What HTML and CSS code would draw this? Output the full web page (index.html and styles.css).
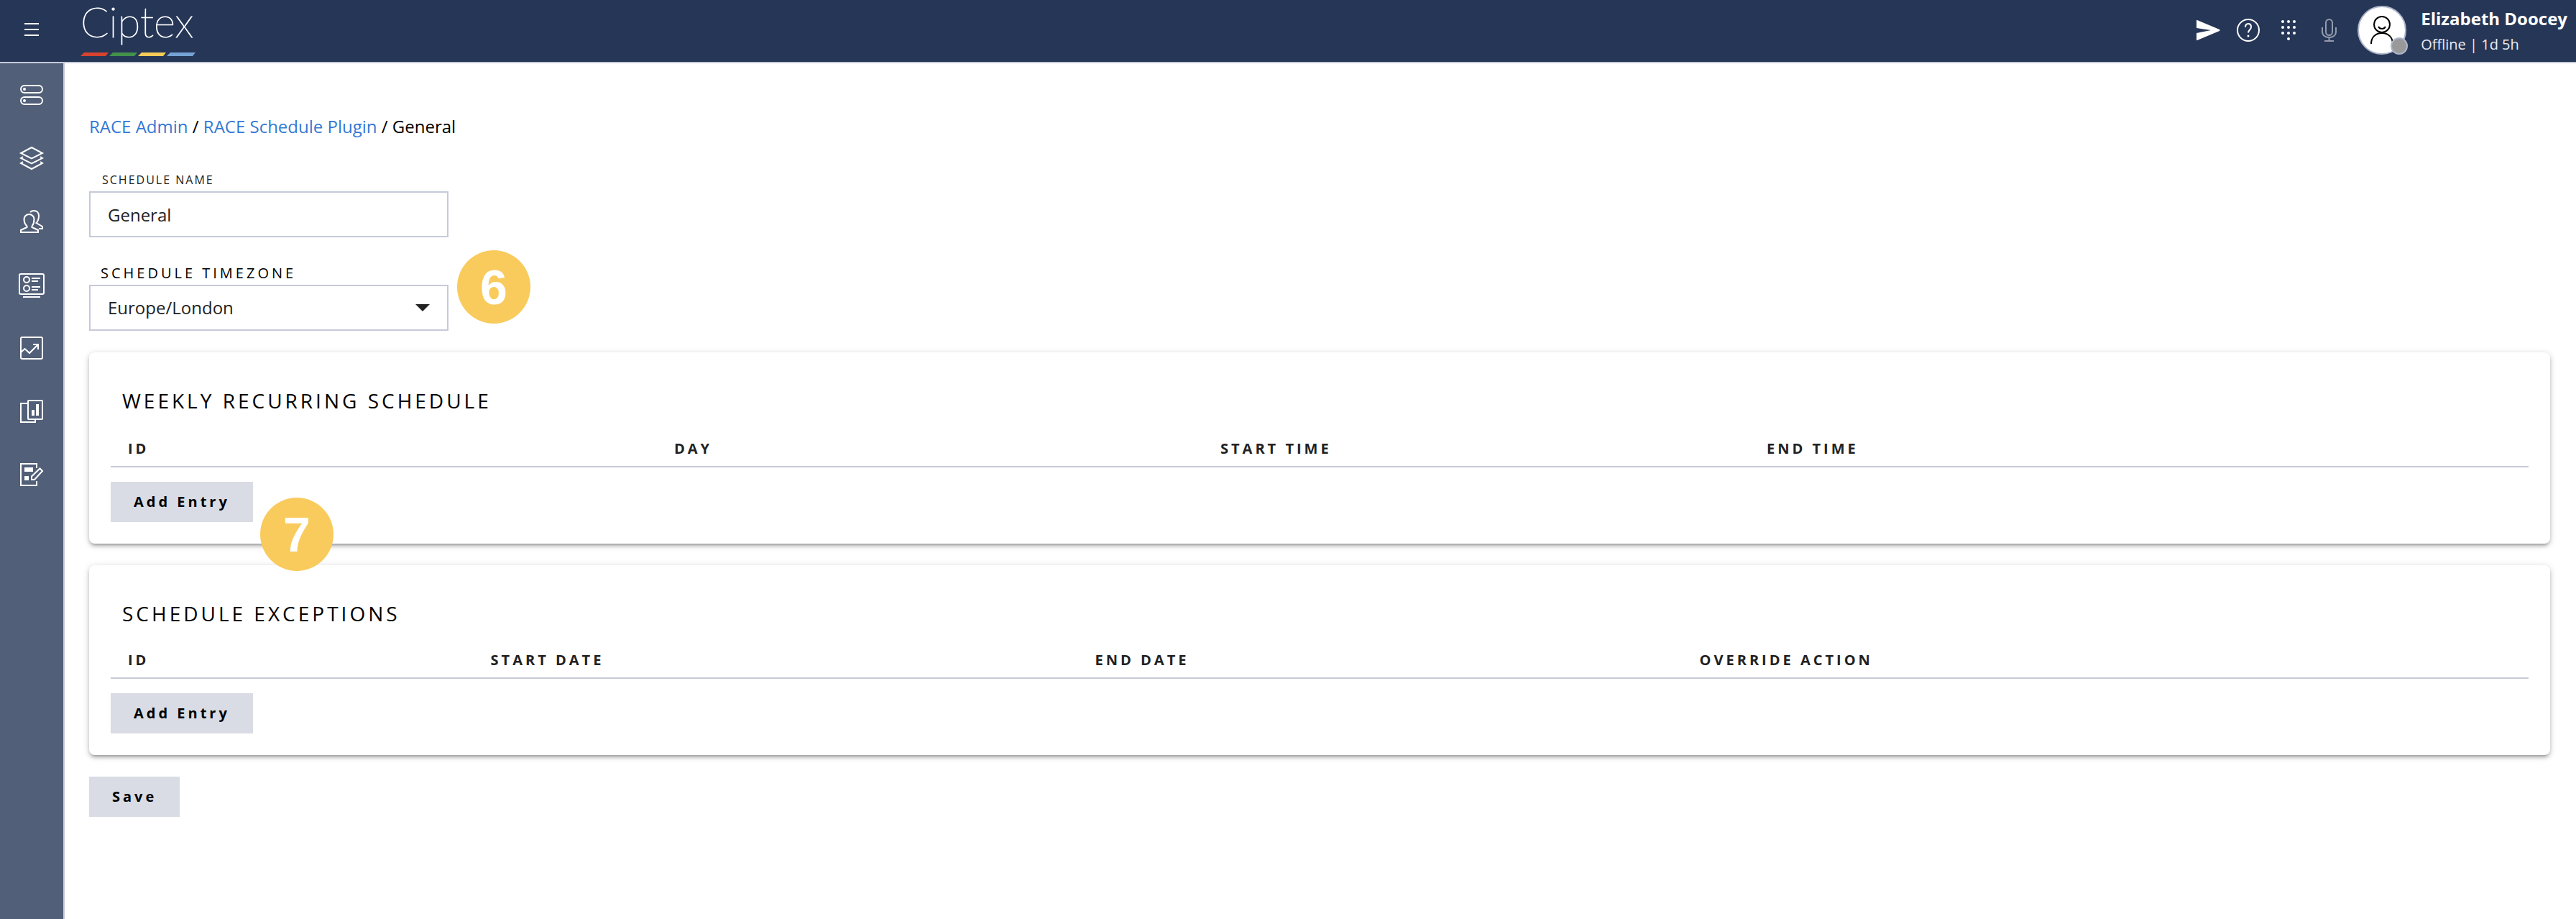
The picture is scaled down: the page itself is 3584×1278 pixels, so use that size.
FILE: index.html
```html
<!DOCTYPE html>
<html lang="en">
<head>
    <meta charset="UTF-8">
    <meta name="viewport" content="width=device-width, initial-scale=1.0">
    <title>RACE Schedule Plugin</title>

    <link rel="stylesheet" href="styles.css">
</head>
<body>

    <header class="topbar">
        <button class="iconButton menuButton" type="button" aria-label="Menu">
            <svg class="icon" viewBox="0 0 48 48"><path d="M14 15h20M14 23h20M14 31h20"/></svg>
        </button>

        <div class="logo">
            <span class="logoText">Ciptex</span>
            <svg class="logoStripes" viewBox="0 0 160 5">
                <path fill="#d8432f" d="M5 0h34l-4 5H0z"/>
                <path fill="#43914a" d="M45 0h34l-4 5H40z"/>
                <path fill="#f8cb57" d="M85 0h34l-4 5H80z"/>
                <path fill="#76a3d6" d="M125 0h35l-4 5h-36z"/>
            </svg>
        </div>

        <div class="actions">
            <button class="iconButton" type="button" aria-label="Send">
                <svg class="icon" viewBox="0 0 48 48"><path class="solid" d="M8 10.500Q8 9.500 9 10L40 23q1.500 1 0 2L9 38q-1 .5-1-1V28l20-4L8 21z"/></svg>
            </button>
            <button class="iconButton" type="button" aria-label="Help">
                <svg class="icon" viewBox="0 0 48 48"><circle cx="24" cy="24" r="15"/><path d="M20 20c0-3 1.500-5 4-5s4 2 4 4.500c0 4-4 4-4 8"/><circle class="solid" cx="24" cy="32" r="1.500"/></svg>
            </button>
            <button class="iconButton" type="button" aria-label="Dialpad">
                <svg class="icon" viewBox="0 0 48 48">
                    <g class="solid">
                        <circle cx="16" cy="12" r="2"/><circle cx="24" cy="12" r="2"/><circle cx="32" cy="12" r="2"/>
                        <circle cx="16" cy="20" r="2"/><circle cx="24" cy="20" r="2"/><circle cx="32" cy="20" r="2"/>
                        <circle cx="16" cy="28" r="2"/><circle cx="24" cy="28" r="2"/><circle cx="32" cy="28" r="2"/>
                        <circle cx="24" cy="36" r="2"/>
                    </g>
                </svg>
            </button>
            <button class="iconButton muted" type="button" aria-label="Mute">
                <svg class="icon" viewBox="0 0 48 48"><rect x="20" y="9" width="9" height="22" rx="4.500"/><path d="M15 20v6c0 5 4 8 9.500 8s9.500-3 9.500-8v-6M24.500 34v5M18 39h13"/></svg>
            </button>
        </div>

        <div class="user">
            <div class="avatar">
                <svg class="avatarIcon" viewBox="0 0 64 64"><circle cx="32" cy="24" r="11"/><path d="M27 27c2 4 8 4 10 0M17 51c0-9 6-15 15-15s15 6 15 15"/></svg>
                <span class="presence"></span>
            </div>
            <div class="userInfo">
                <div class="userName">Elizabeth Doocey</div>
                <div class="userStatus">Offline | 1d 5h</div>
            </div>
        </div>
    </header>

    <div class="layout">
        <nav class="sidebar">
            <button class="iconButton" type="button" aria-label="Queues">
                <svg class="icon" viewBox="0 0 48 48"><rect x="9" y="11" width="30" height="10" rx="5"/><rect x="9" y="27" width="30" height="10" rx="5"/><circle class="solid" cx="14" cy="16" r="2"/><circle class="solid" cx="14" cy="32" r="2"/></svg>
            </button>
            <button class="iconButton" type="button" aria-label="Tasks">
                <svg class="icon" viewBox="0 0 48 48"><path d="M24 9l15 8-15 7.500L9 17zM12 22l-3 2 15 7.500L39 24l-3-2M12 29l-3 2 15 8 15-8-3-2"/></svg>
            </button>
            <button class="iconButton" type="button" aria-label="Teams">
                <svg class="icon" viewBox="0 0 48 48"><path d="M20.500 14c-4 0-7 3-7 7 0 4 1.500 7 4 9.500V32L9 36v3h24v-3l-8.500-4v-1.500c2-2.500 3-5.500 3-9.500 0-4-3-7-7-7zM22 11c1.300-1.200 3-2 5-2 4.500 0 7 3 7 7 0 4-.5 7-3.500 10l8.500 5v3h-5"/></svg>
            </button>
            <button class="iconButton" type="button" aria-label="Admin">
                <svg class="icon" viewBox="0 0 48 48"><rect x="7" y="9" width="34" height="28" rx="2"/><circle cx="17" cy="17" r="4"/><circle cx="17" cy="29" r="4"/><path d="M24 15h12M24 19h9M24 27h12M24 31h9M12 41h24"/></svg>
            </button>
            <button class="iconButton" type="button" aria-label="Insights">
                <svg class="icon" viewBox="0 0 48 48"><rect x="9" y="9" width="30" height="30" rx="2"/><path d="M9 30l5.500-5 6.500 6 12-12M26 19h7v7"/></svg>
            </button>
            <button class="iconButton" type="button" aria-label="Dashboards">
                <svg class="icon" viewBox="0 0 48 48"><rect x="19" y="9" width="20" height="26" rx="1"/><path d="M18 13H9v26h20v-3"/><path class="solid" d="M24 22h4v8h-4zM30 14h4v16h-4z"/></svg>
            </button>
            <button class="iconButton" type="button" aria-label="Questionnaires">
                <svg class="icon" viewBox="0 0 48 48"><path d="M31 15V9H9v30h22v-6M24 31v-4.500L35.500 15.500 39 19 28 31z"/><path class="solid" d="M14 14h12v6H14zM14 26h6v6h-6z"/></svg>
            </button>
        </nav>

        <main class="content">
            <div class="breadcrumb">
                <a href="#">RACE Admin</a> / <a href="#">RACE Schedule Plugin</a> / General
            </div>

            <form id="scheduleForm" onsubmit="event.preventDefault()">

                <div class="field">
                    <label class="labelSmall" for="scheduleName">SCHEDULE NAME</label>
                    <input type="text" name="scheduleName" id="scheduleName" value="General">
                </div>

                <div class="field">
                    <label for="timezone">SCHEDULE TIMEZONE</label>
                    <select name="timezone" id="timezone">
                        <option>Europe/London</option>
                    </select>
                    <span class="step stepTimezone">6</span>
                </div>

                <section class="card">
                    <h2>WEEKLY RECURRING SCHEDULE</h2>
                    <table class="weekly">
                        <thead>
                            <tr>
                                <th>ID</th>
                                <th>DAY</th>
                                <th>START TIME</th>
                                <th>END TIME</th>
                                <th class="rowActions"></th>
                            </tr>
                        </thead>
                    </table>
                    <button class="button" type="button">Add Entry</button>
                    <span class="step stepEntry">7</span>
                </section>

                <section class="card">
                    <h2>SCHEDULE EXCEPTIONS</h2>
                    <table class="exceptions">
                        <thead>
                            <tr>
                                <th class="idCol">ID</th>
                                <th>START DATE</th>
                                <th>END DATE</th>
                                <th>OVERRIDE ACTION</th>
                                <th class="rowActions"></th>
                            </tr>
                        </thead>
                    </table>
                    <button class="button" type="button">Add Entry</button>
                </section>

                <button class="button" type="submit">Save</button>

            </form>
        </main>
    </div>

</body>
</html>
```
FILE: styles.css
```css
*{
    margin: 0;
    padding: 0;
    box-sizing: border-box;
}

body{
    min-height: 100vh;
    display: flex;
    flex-direction: column;

    font-family: "Open Sans", sans-serif;
    font-size: 24px;
    line-height: 32px;
    color: #000000;
    background-color: #ffffff;
}

button, input, select{
    font: inherit;
    color: inherit;
    border: 0;
    border-radius: 0;
    outline: none;
}

button{
    cursor: pointer;
}

/* top bar */

.topbar{
    display: flex;
    align-items: center;
    height: 88px;
    padding: 0 12px 2px 0;

    color: #ffffff;
    background-color: #263657;
    border-bottom: 2px solid #c6cad7;
}

.iconButton{
    display: flex;
    align-items: center;
    justify-content: center;
    width: 56px;
    height: 56px;
    background-color: transparent;
}

.menuButton{
    width: 88px;
}

.icon{
    width: 48px;
    height: 48px;
    fill: none;
    stroke: #ffffff;
    stroke-width: 2;
}

.icon .solid{
    fill: #ffffff;
    stroke: none;
}

.muted{
    opacity: 0.5;
}

.logo{
    display: flex;
    flex-direction: column;
    gap: 19px;
    margin-left: 24px;
}

.logoText{
    font-family: Lato, sans-serif;
    font-size: 58px;
    font-weight: 100;
    line-height: 48px;
    -webkit-text-stroke: 1px #ffffff;
}

.logoStripes{
    width: 160px;
    height: 5px;
}

.actions{
    display: flex;
    margin-left: auto;
}

.user{
    display: flex;
    align-items: center;
    gap: 20px;
    margin-left: 12px;
}

.avatar{
    position: relative;
    width: 68px;
    height: 68px;
    background-color: #ffffff;
    border: 2px solid #aeb5ca;
    border-radius: 50%;
}

.avatarIcon{
    display: block;
    fill: none;
    stroke: #000000;
    stroke-width: 2;
}

.presence{
    position: absolute;
    right: -4px;
    bottom: -2px;
    width: 24px;
    height: 24px;
    background-color: #999999;
    border: 2px solid #aeb5ca;
    border-radius: 50%;
}

.userInfo{
    padding-top: 4px;
    line-height: 36px;
}

.userName{
    font-weight: bold;
}

.userStatus{
    font-size: 20px;
    color: #e9ebf0;
}

/* page */

.layout{
    flex: 1;
    display: flex;
}

.sidebar{
    width: 90px;
    background-color: #525f78;
    border-right: 2px solid #c6cad7;
}

.sidebar .iconButton{
    width: 88px;
    height: 88px;
}

.content{
    flex: 1;
    padding: 72px 36px 72px 34px;
}

.breadcrumb{
    margin-bottom: 46px;
}

.breadcrumb a{
    color: #3578d4;
    text-decoration: none;
}

/* form */

.field{
    position: relative;
    width: 500px;
    margin-bottom: 36px;
}

.field + .field{
    margin-bottom: 30px;
}

.field label{
    display: block;
    padding-left: 16px;
    margin-bottom: 2px;
    font-size: 20px;
    line-height: 28px;
    letter-spacing: 4px;
}

.field .labelSmall{
    padding-left: 18px;
    margin-bottom: 4px;
    font-size: 16px;
    line-height: 24px;
    letter-spacing: 2px;
    color: #222222;
}

.field input, .field select{
    display: block;
    width: 100%;
    height: 64px;
    padding: 0 24px;
    color: #222222;
    background-color: #ffffff;
    border: 2px solid #c6cad7;
}

.field select{
    appearance: none;
    background-image: url("data:image/svg+xml,%3Csvg xmlns='http://www.w3.org/2000/svg' viewBox='0 0 20 10'%3E%3Cpath fill='%23222222' d='M0 0h20L10 10z'/%3E%3C/svg%3E");
    background-repeat: no-repeat;
    background-position: right 24px center;
    background-size: 20px 10px;
}

.card{
    position: relative;
    padding: 47px 30px 30px;
    margin-bottom: 30px;
    background-color: #ffffff;
    border-radius: 8px;
    box-shadow: 0 2px 10px rgba(0, 0, 0, 0.2), 0 4px 4px rgba(0, 0, 0, 0.14), 0 6px 2px -4px rgba(0, 0, 0, 0.12);
}

.card h2{
    padding-left: 16px;
    font-size: 28px;
    font-weight: normal;
    line-height: 40px;
    letter-spacing: 4px;
}

table{
    width: 100%;
    margin-bottom: 20px;
    table-layout: fixed;
    border-spacing: 0;
}

th{
    padding: 31px 24px 10px;
    font-size: 20px;
    line-height: 28px;
    letter-spacing: 4px;
    text-align: left;
    color: #222222;
    border-bottom: 2px solid #c6cad7;
}

.weekly th{
    padding-top: 33px;
}

.weekly .rowActions{
    width: 324px;
}

.exceptions .idCol{
    width: 15%;
}

.exceptions .rowActions{
    width: 10%;
}

.button{
    display: block;
    height: 56px;
    padding: 0 32px;
    font-size: 20px;
    font-weight: bold;
    letter-spacing: 4px;
    background-color: #d9dce4;
}

/* numbered markers over the form */

.step{
    position: absolute;
    width: 102px;
    height: 102px;
    font-family: "Liberation Sans", Arial, sans-serif;
    font-size: 68px;
    font-weight: bold;
    line-height: 102px;
    text-align: center;
    color: #ffffff;
    background-color: #f8cb5c;
    border-radius: 50%;
}

.stepTimezone{
    left: 512px;
    bottom: 10px;
}

.stepEntry{
    left: 238px;
    bottom: -38px;
    z-index: 1;
}
```
